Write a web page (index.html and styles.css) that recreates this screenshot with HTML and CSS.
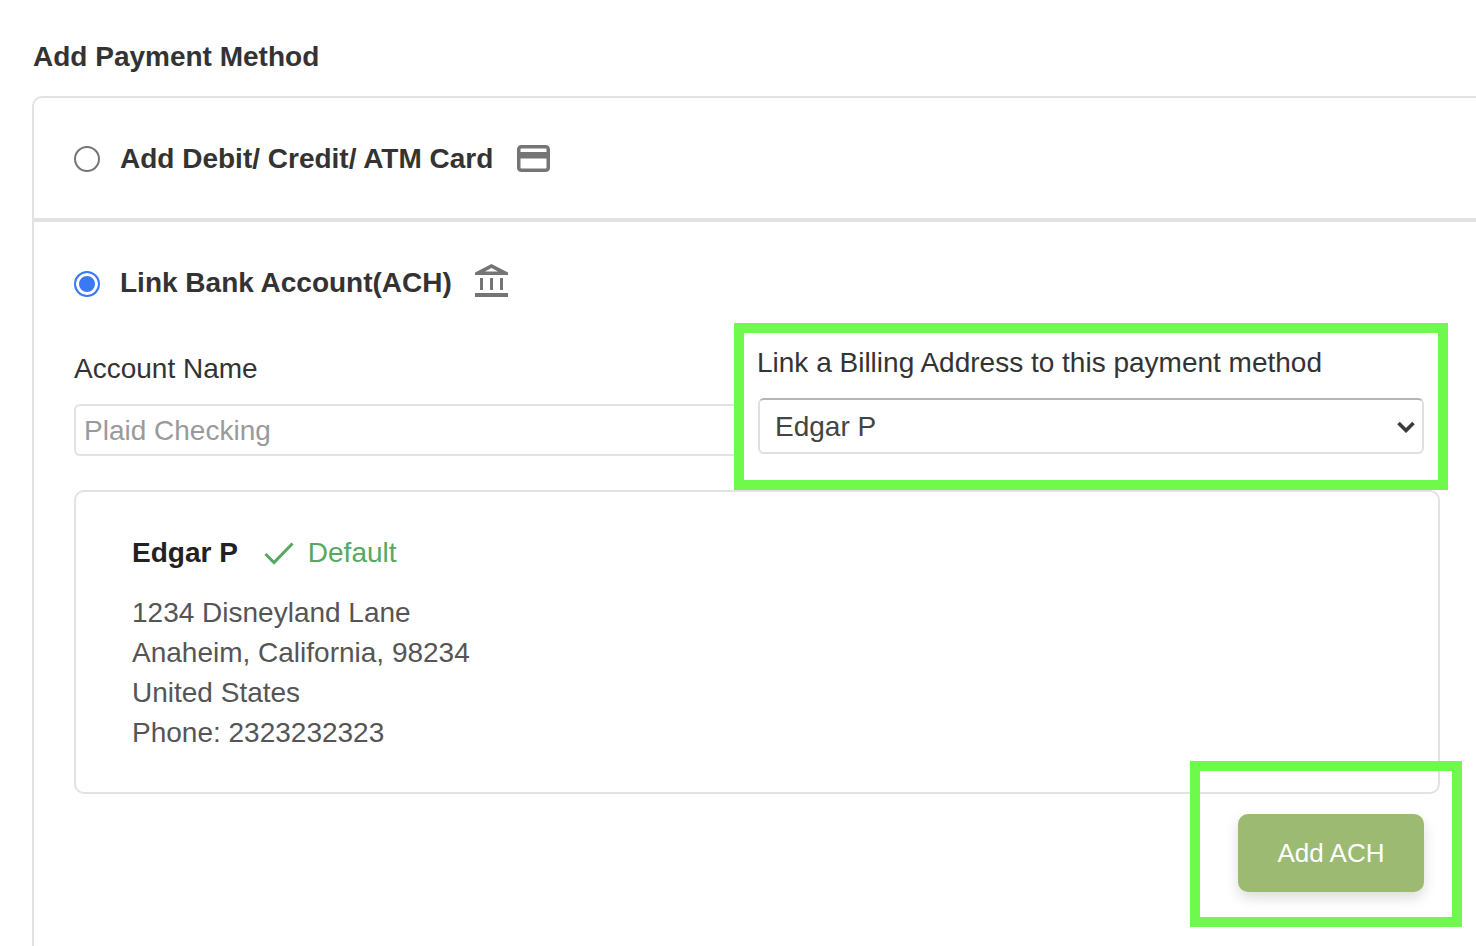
FILE: index.html
```html
<!DOCTYPE html>
<html lang="en">
<head>
    <meta charset="UTF-8">
    <title>Add Payment Method</title>
    <link rel="stylesheet" href="styles.css">
</head>
<body>
    <h1 class="page-title">Add Payment Method</h1>

    <div class="payment-card">
        <div class="method-row">
            <label class="method-label">
                <input class="radio" type="radio" name="method">
                <span>Add Debit/ Credit/ ATM Card</span>
            </label>
            <svg class="method-icon card-icon" width="33" height="27" viewBox="0 0 33 27">
                <rect x="1.75" y="1.75" width="29.5" height="23.5" rx="2.5" fill="none" stroke="#757575" stroke-width="3.5"/>
                <rect x="2" y="7" width="29" height="6.5" fill="#757575"/>
            </svg>
        </div>

        <div class="ach-section">
            <div class="method-row method-row-ach">
                <label class="method-label">
                    <input class="radio" type="radio" name="method" checked>
                    <span>Link Bank Account(ACH)</span>
                </label>
                <svg class="method-icon bank-icon" width="33" height="33" viewBox="0 0 33 33">
                    <path d="M16.5 0 L33 8.5 V11 H0 V8.5 Z M16.5 4 L10 7.5 H23 Z" fill="#757575" fill-rule="evenodd"/>
                    <rect x="5" y="14" width="3" height="12" fill="#757575"/>
                    <rect x="15" y="14" width="3" height="12" fill="#757575"/>
                    <rect x="25" y="14" width="3" height="12" fill="#757575"/>
                    <rect x="0" y="29" width="33" height="4" fill="#757575"/>
                </svg>
            </div>

            <div class="form-row">
                <div class="account-field">
                    <label class="field-label" for="accountName">Account Name</label>
                    <input class="text-input" id="accountName" type="text" placeholder="Plaid Checking">
                </div>
                <div class="billing-field">
                    <label class="billing-label" for="billing">Link a Billing Address to this payment method</label>
                    <div class="select-wrap">
                        <select class="select-input" id="billing">
                            <option>Edgar P</option>
                        </select>
                        <svg class="select-arrow" width="18" height="12" viewBox="0 0 18 12">
                            <path d="M1.5 2 L9 9.5 L16.5 2" fill="none" stroke="#3c3c3c" stroke-width="3.6"/>
                        </svg>
                    </div>
                </div>
            </div>

            <div class="address-card">
                <div class="address-head">
                    <span class="address-name">Edgar P</span>
                    <svg class="check-icon" width="30" height="24" viewBox="0 0 30 24">
                        <path d="M1.5 13 L10 21.5 L28.5 2.5" fill="none" stroke="#55a960" stroke-width="3"/>
                    </svg>
                    <span class="default-tag">Default</span>
                </div>
                <div class="address-lines">
                    <div>1234 Disneyland Lane</div>
                    <div>Anaheim, California, 98234</div>
                    <div>United States</div>
                    <div>Phone: 2323232323</div>
                </div>
            </div>

            <div class="actions">
                <button class="add-btn" type="button">Add ACH</button>
                <div class="highlight-box"></div>
            </div>
        </div>
    </div>
</body>
</html>
```

FILE: styles.css
```css
html, body {
    height: 100%;
}

body {
    margin: 0;
    padding: 0 0 0 33px;
    background: #fff;
    font-family: "Liberation Sans", Arial, sans-serif;
    color: #333;
    overflow: hidden;
}

.page-title {
    margin: 0;
    padding-top: 41px;
    height: 55px;
    font-size: 28px;
    line-height: 32px;
    font-weight: bold;
    color: #333;
}

/* runs off the right and bottom of the window */
.payment-card {
    height: 850px;
    margin-left: -1px;
    border: 2px solid #e2e2e2;
    border-right: 0;
    border-bottom: 0;
    border-radius: 10px 0 0 0;
    box-sizing: border-box;
}

.method-row {
    display: flex;
    align-items: center;
    height: 118px;
    padding: 2px 0 0 40px;
    border-bottom: 4px solid #e2e2e2;
}

.method-row-ach {
    height: 121px;
    padding-top: 0;
    border-bottom: 0;
}

.method-label {
    display: flex;
    align-items: center;
    gap: 20px;
    font-size: 28px;
    font-weight: bold;
    color: #333;
}

.radio {
    appearance: none;
    width: 26px;
    height: 26px;
    margin: 0;
    border: 2px solid #757575;
    border-radius: 50%;
    background: #fff;
    flex: none;
}

.radio:checked {
    margin-top: 2px;
    border-color: #3b78f6;
    box-shadow: inset 0 0 0 3px #fff;
    background: #3b78f6;
}

.method-icon {
    display: block;
    margin-left: 24px;
}

.card-icon {
    margin-bottom: 2px;
}

.bank-icon {
    margin: 0 0 5px 23px;
}

.ach-section {
    padding: 0 36px 0 40px;
}

.ach-section .method-row {
    padding-left: 0;
}

.form-row {
    display: flex;
    align-items: flex-end;
    margin: -20px -8px 0 0;
}

.account-field {
    flex: 1;
    padding-bottom: 34px;
}

.field-label {
    display: block;
    font-size: 28px;
    line-height: 32px;
    margin-bottom: 19px;
    color: #333;
}

.text-input {
    display: block;
    width: 100%;
    height: 52px;
    padding: 2px 8px 0;
    box-sizing: border-box;
    border: 2px solid #e2e2e2;
    border-right: 0;
    border-radius: 6px 0 0 6px;
    font-family: inherit;
    font-size: 28px;
    color: #333;
}

.text-input::placeholder {
    color: #9a9a9a;
    opacity: 1;
}

.billing-field {
    flex: none;
    width: 714px;
    height: 167px;
    box-sizing: border-box;
    border: 10px solid #70f94d;
    background: #fff;
    padding: 14px 14px 0 13px;
}

.billing-label {
    display: block;
    font-size: 28px;
    line-height: 32px;
    margin-bottom: 19px;
    color: #333;
}

.select-wrap {
    position: relative;
    margin-left: 1px;
}

.select-input {
    appearance: none;
    display: block;
    width: 100%;
    height: 56px;
    padding: 0 15px;
    box-sizing: border-box;
    border: 2px solid #e0e0e0;
    border-top-color: #b5b5b5;
    border-radius: 6px;
    background: #fff;
    font-family: inherit;
    font-size: 28px;
    color: #444;
}

.select-arrow {
    position: absolute;
    right: 9px;
    top: 23px;
}

.address-card {
    height: 304px;
    box-sizing: border-box;
    border: 2px solid #e2e2e2;
    border-radius: 10px;
    padding: 43px 56px 0;
}

.address-head {
    display: flex;
    align-items: center;
    height: 36px;
}

.address-name {
    font-size: 28px;
    font-weight: bold;
    color: #222;
}

.check-icon {
    display: block;
    margin-left: 26px;
}

.default-tag {
    margin-left: 14px;
    font-size: 28px;
    color: #55a960;
}

.address-lines {
    margin-top: 22px;
    font-size: 28px;
    line-height: 40px;
    color: #555;
}

.actions {
    position: relative;
    display: flex;
    justify-content: flex-end;
    padding: 20px 16px 0 0;
}

.add-btn {
    width: 186px;
    height: 78px;
    border: 0;
    border-radius: 10px;
    background: #9cba72;
    color: #fff;
    font-family: inherit;
    font-size: 26px;
    box-shadow: 0 6px 14px rgba(0, 0, 0, 0.14);
}

/* annotation drawn over the screenshot */
.highlight-box {
    position: absolute;
    right: -22px;
    top: -33px;
    width: 272px;
    height: 166px;
    box-sizing: border-box;
    border: 10px solid #70f94d;
    pointer-events: none;
}
```
